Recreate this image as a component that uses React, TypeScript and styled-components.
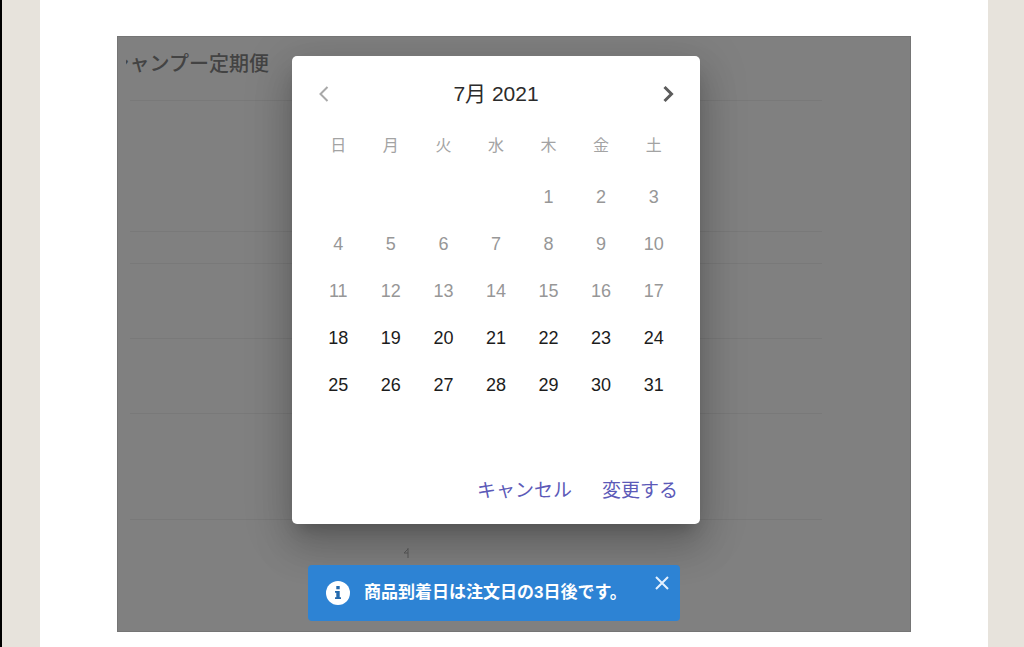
import React from "react";
import styled, { createGlobalStyle } from "styled-components";

const GlobalStyle = createGlobalStyle`
  *, *::before, *::after { box-sizing: border-box; }
  body {
    margin: 0;
    font-family: "Liberation Sans", "Noto Sans CJK JP", sans-serif;
  }
  button { font-family: inherit; }
`;

const Page = styled.div`
  min-height: 100vh;
  display: flex;
  border-left: 2px solid #000;
  padding: 0 36px 0 38px;
  background: #e7e3dc;
`;

const Article = styled.main`
  flex: 1;
  min-width: 0;
  padding: 36px 77px 15px;
  background: #fff;
`;

const Screen = styled.section`
  display: grid;
  grid-template-columns: minmax(0, 1fr);
  border: 1px solid #757575;
  background: #808080;
  overflow: hidden;
`;

const OrderList = styled.div`
  grid-area: 1 / 1;
  padding: 0 88px 0 8px;
`;

const OrderRow = styled.div<{ $height: number }>`
  height: ${(p) => p.$height}px;
  margin-left: 4px;
  border-bottom: 1px solid #797979;
`;

const OrderHeading = styled.div`
  height: 64px;
  margin-left: 4px;
  display: flex;
  border-bottom: 1px solid #797979;
`;

const OrderTitle = styled.h2`
  flex: none;
  display: flex;
  justify-content: flex-end;
  width: 143px;
  margin: 0 0 0 -4px;
  padding-top: 12px;
  overflow: hidden;
  white-space: nowrap;
  font-size: 20px;
  line-height: 30px;
  font-weight: 500;
  color: #434343;
`;

const Overlay = styled.div`
  grid-area: 1 / 1;
  display: flex;
  flex-direction: column;
  align-items: center;
  padding: 19px 36px 10px 0;
  z-index: 1;
`;

const Dialog = styled.div`
  width: 100%;
  max-width: 408px;
  padding: 20px 20px 0;
  border-radius: 5px;
  background: #fff;
  box-shadow: 0 11px 15px -7px rgba(0, 0, 0, 0.2),
    0 24px 38px 3px rgba(0, 0, 0, 0.14), 0 9px 46px 8px rgba(0, 0, 0, 0.12);
`;

const MonthBar = styled.header`
  display: flex;
  align-items: center;
  justify-content: space-between;
  height: 36px;
`;

const MonthName = styled.h1`
  margin: 0;
  font-size: 21px;
  line-height: 32px;
  font-weight: 400;
  color: #2b2b2b;
`;

const IconButton = styled.button<{ $size: number }>`
  display: flex;
  align-items: center;
  justify-content: center;
  width: ${(p) => p.$size}px;
  height: ${(p) => p.$size}px;
  padding: 0;
  border: 0;
  background: none;
  color: #5c5c5c;

  &:disabled { color: #a8a8a8; }
`;

const Calendar = styled.table`
  width: 100%;
  table-layout: fixed;
  border-collapse: collapse;
`;

const Weekday = styled.th`
  height: 61px;
  padding: 6px 0 0;
  font-size: 16px;
  line-height: 24px;
  font-weight: 400;
  color: #a3a3a3;
`;

const DayCell = styled.td`
  height: 47px;
  padding: 0;
  text-align: center;
`;

const Day = styled.button`
  width: 44px;
  height: 44px;
  padding: 0;
  border: 0;
  border-radius: 50%;
  background: none;
  font-size: 18px;
  line-height: 24px;
  color: #1c1c1c;

  &:disabled { color: #979797; }
`;

const Actions = styled.footer`
  display: flex;
  align-items: center;
  justify-content: flex-end;
  gap: 30px;
  height: 69px;
  padding: 2px 2px 0 0;
`;

const TextButton = styled.button`
  padding: 0;
  border: 0;
  background: none;
  font-size: 19px;
  line-height: 28px;
  white-space: nowrap;
  color: #5c5ab8;
`;

const PageMark = styled.svg`
  align-self: center;
  margin: 24px 180px 6px 0;
`;

const Toast = styled.div`
  display: flex;
  align-items: center;
  width: 100%;
  max-width: 372px;
  height: 56px;
  margin-right: 4px;
  padding: 0 8px 0 18px;
  border-radius: 4px;
  background: #2d83d4;
  color: #fff;
`;

const ToastText = styled.p`
  flex: 1;
  margin: 0 0 0 14px;
  font-size: 17px;
  line-height: 24px;
  font-weight: 700;
`;

const CloseSlot = styled.div`
  align-self: flex-start;
  padding-top: 8px;
`;

const weekdays = ["日", "月", "火", "水", "木", "金", "土"];
const firstWeekday = 4;
const daysInMonth = 31;
const firstOpenDay = 18;
const weeks = Array.from({ length: 6 }, (_, w) =>
  Array.from({ length: 7 }, (_, d) => {
    const day = w * 7 + d - firstWeekday + 1;
    return day >= 1 && day <= daysInMonth ? day : null;
  })
);
const orderRowHeights = [131, 32, 75, 75, 106];

function Chevron({ d, width }: { d: string; width: number }) {
  return (
    <svg width="24" height="24" viewBox="0 0 24 24" fill="none" stroke="currentColor" strokeWidth={width} aria-hidden="true">
      <path d={d} />
    </svg>
  );
}

export default function App() {
  return (
    <>
      <GlobalStyle />
      <Page>
        <Article>
          <Screen>
            <OrderList>
              <OrderHeading>
                <OrderTitle>シャンプー定期便</OrderTitle>
              </OrderHeading>
              {orderRowHeights.map((h, i) => (
                <OrderRow key={i} $height={h} />
              ))}
            </OrderList>
            <Overlay>
              <Dialog role="dialog" aria-labelledby="month-name">
                <MonthBar>
                  <IconButton $size={24} aria-label="前の月" disabled>
                    <Chevron d="M15.5 5 8.5 12l7 7" width={2} />
                  </IconButton>
                  <MonthName id="month-name">7月 2021</MonthName>
                  <IconButton $size={24} aria-label="次の月">
                    <Chevron d="M8.5 5l7 7-7 7" width={3} />
                  </IconButton>
                </MonthBar>
                <Calendar>
                  <thead>
                    <tr>
                      {weekdays.map((w) => (
                        <Weekday key={w} scope="col">{w}</Weekday>
                      ))}
                    </tr>
                  </thead>
                  <tbody>
                    {weeks.map((week, i) => (
                      <tr key={i}>
                        {week.map((day, j) => (
                          <DayCell key={j}>
                            {day && <Day disabled={day < firstOpenDay}>{day}</Day>}
                          </DayCell>
                        ))}
                      </tr>
                    ))}
                  </tbody>
                </Calendar>
                <Actions>
                  <TextButton>キャンセル</TextButton>
                  <TextButton>変更する</TextButton>
                </Actions>
              </Dialog>
              <PageMark width="8" height="11" viewBox="0 0 8 11" aria-hidden="true">
                <path d="M6 0v10M6 1 2 5h4" fill="none" stroke="#505050" strokeWidth="1" />
              </PageMark>
              <Toast role="status">
                <svg width="24" height="24" viewBox="0 0 24 24" aria-hidden="true">
                  <circle cx="12" cy="12" r="12" fill="#fff" />
                  <path d="M10.3 5h3.4v3.2h-3.4zM9 10h4.7v6.2H15V18H9v-1.8h1.3v-4.4H9z" fill="#2469ad" />
                </svg>
                <ToastText>商品到着日は注文日の3日後です。</ToastText>
                <CloseSlot>
                  <IconButton $size={20} aria-label="閉じる">
                    <svg width="14" height="14" viewBox="0 0 14 14" fill="none" stroke="#e4f1ff" strokeWidth="2" aria-hidden="true">
                      <path d="M1 1l12 12M13 1L1 13" />
                    </svg>
                  </IconButton>
                </CloseSlot>
              </Toast>
            </Overlay>
          </Screen>
        </Article>
      </Page>
    </>
  );
}
